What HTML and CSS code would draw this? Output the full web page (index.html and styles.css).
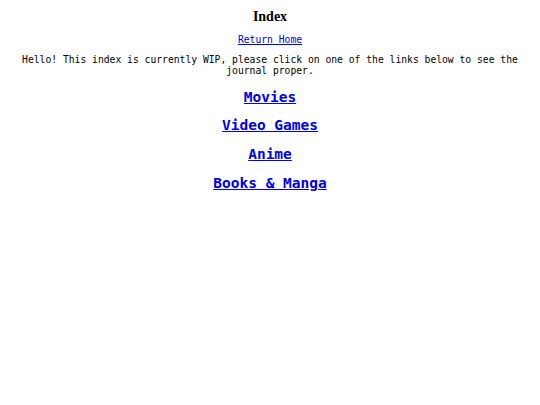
FILE: index.html
```html
<!DOCTYPE html>
<html>
<head>
<meta charset="utf-8">
<title>Index</title>
<link rel="stylesheet" href="styles.css">
</head>
<body>
<h3 class="title">Index</h3>
<div class="content">
<p class="home"><a href="#">Return Home</a></p>
<p class="intro">Hello! This index is currently WIP, please click on one of the links below to see the journal proper.</p>
<h2 class="cat"><a href="#">Movies</a></h2>
<h2 class="cat"><a href="#">Video Games</a></h2>
<h2 class="cat"><a href="#">Anime</a></h2>
<h2 class="cat"><a href="#">Books &amp; Manga</a></h2>
</div>
</body>
</html>
```
FILE: styles.css
```css
html, body {
  background: #ffffff;
}
body {
  margin: 6px;
  text-align: center;
  color: #000000;
}
.title {
  font-family: "Liberation Serif", serif;
  font-size: 14px;
  font-weight: bold;
  margin: 3px 0 9px;
  line-height: 16px;
}
.content {
  font-family: "DejaVu Sans Mono", monospace;
  font-size: 9.7px;
  line-height: 11.5px;
}
.content p {
  margin: 8px 0;
}
.content a {
  color: #0000ee;
}
.cat {
  font-size: 14.5px;
  font-weight: bold;
  margin: 12px 0;
  line-height: 16.8px;
}
```
